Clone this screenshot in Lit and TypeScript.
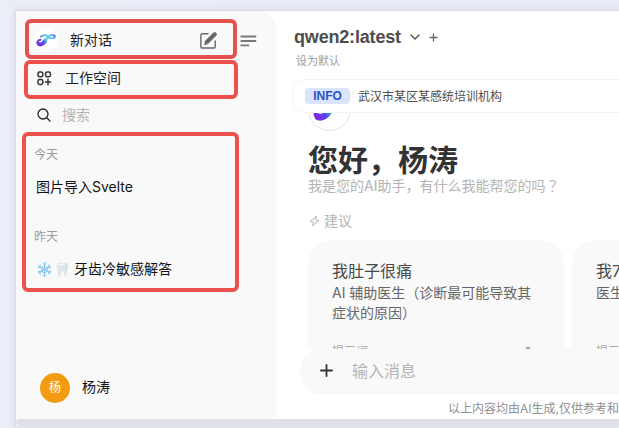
import { LitElement, html, css, svg } from "lit";
import { customElement } from "lit/decorators.js";

const ribbon = (id: string) => svg`
  <defs>
    <linearGradient id=${id} gradientUnits="userSpaceOnUse" x1="1" y1="13" x2="19" y2="2">
      <stop offset="0" stop-color="#8a1ee4"/>
      <stop offset=".32" stop-color="#5548e4"/>
      <stop offset=".55" stop-color="#4ec4ea"/>
      <stop offset=".8" stop-color="#6cc8ee"/>
      <stop offset="1" stop-color="#5a70e8"/>
    </linearGradient>
  </defs>
  <g fill="none" stroke="url(#${id})" stroke-linecap="round" stroke-linejoin="round">
    <path stroke-width="2" d="M4.500 6.800C1.600 7.200.6 9.800 2 11"/>
    <path stroke-width="4" d="M3 11.200C5.600 12 8 10 9 8"/>
    <path stroke-width="2" d="M9.800 7.500C11 4.600 12.600 2.200 15.500 2C18 1.800 19.300 3 18.600 4.200C17.800 5.600 15.600 5.600 13 4.800"/>
    <path stroke-width="1.800" d="M5 3.600C7.800 1.300 11 1.700 13 4.800"/>
  </g>`;

@customElement("app-sidebar")
class AppSidebar extends LitElement {
  static styles = css`
    :host { display: flex; flex-direction: column; box-sizing: border-box; width: 260px; height: 408px; padding-top: 8px;
      background: #f9f9f9; border-radius: 0 16px 6px 0; color: #222; font-size: 14px; line-height: 20px; flex: none; }
    svg { display: block; flex: none; }
    .top { display: flex; align-items: center; }
    .frame { box-sizing: border-box; border: 4px solid #ed514e; border-radius: 6px; display: flex; align-items: center; }
    .new { width: 212px; height: 40px; margin-left: 9px; padding: 2px 16px 0 5px; border-color: #e4524f; }
    .logo { width: 24px; height: 24px; border-radius: 50%; background: #fff; display: grid; place-items: center; }
    .new span { margin-left: 12px; flex: 1; }
    .menu { margin: 3px 0 0 3px; }
    .work { width: 214px; height: 39px; margin: 1px 0 0 8px; padding-left: 10px; padding-bottom: 3px; }
    .work svg { margin-left: -1px; }
    .work span { margin-left: 13px; }
    .search { display: flex; align-items: center; height: 33px; padding-left: 21px; padding-bottom: 2px; box-sizing: border-box; color: #b4b4b4; }
    .search span { margin-left: 11px; }
    .history { flex-direction: column; align-items: stretch; width: 217px; height: 160px; margin-left: 6px; padding: 9px 0 0 8px; }
    .day { font-size: 12px; line-height: 20px; color: #9b9b9b; }
    .chat { margin: 12px 0 30px 2px; line-height: 20px; display: flex; color: #111; }
    .chat svg { margin: 3px 2px 0 1px; }
    .chat .gap { margin-left: 2px; }
    .chat span.gap { margin-left: 3px; }
    .user { margin: auto 0 16px 24px; display: flex; align-items: center; color: #111; }
    .user span { margin-top: -2px; }
    .avatar { width: 30px; height: 30px; border-radius: 50%; background: #f39c12; color: #fff; font-size: 12px; line-height: 29px; text-align: center; margin-right: 12px; }
  `;
  render() {
    return html`
      <div class="top">
        <div class="frame new">
          <div class="logo"><svg width="20" height="14" viewBox="0 0 20 14">${ribbon("small")}</svg></div>
          <span>新对话</span>
          <svg width="17" height="17" viewBox="0 0 16 16" fill="none" stroke="#666" stroke-width="1.300" stroke-linecap="round" stroke-linejoin="round">
            <path d="M7.500 1.700H2.200A1.400 1.400 0 0 0 .8 3.100V13.600A1.400 1.400 0 0 0 2.200 15H12.900A1.400 1.400 0 0 0 14.300 13.600V8.300"/>
            <path d="M4.400 11.600L5.300 8.300L12.600 1A1.650 1.650 0 0 1 15 3.400L7.700 10.700Z" fill="#666" stroke-width=".8"/>
          </svg>
        </div>
        <svg class="menu" width="17" height="12" viewBox="0 0 17 12" fill="none" stroke="#777" stroke-width="1.800" stroke-linecap="round">
          <path d="M1.300 1.500H15.500M1.300 6H15.500M1.300 10.400H8.500"/>
        </svg>
      </div>
      <div class="frame work">
        <svg width="15" height="15" viewBox="0 0 15 15" fill="none" stroke="#333" stroke-width="1.500" stroke-linecap="round">
          <rect x="1" y="1" width="4.800" height="4.800" rx="1.600"/><rect x="8.600" y="1" width="4.800" height="4.800" rx="1.600"/>
          <rect x="1" y="8.600" width="4.800" height="4.800" rx="1.600"/><path d="M11 8.300V13.700M8.300 11H13.700"/>
        </svg>
        <span>工作空间</span>
      </div>
      <div class="search">
        <svg width="14" height="14" viewBox="0 0 14 14" fill="none" stroke="#222" stroke-width="1.300" stroke-linecap="round"><circle cx="6" cy="6" r="5"/><path d="M9.700 9.700L13 13"/></svg>
        <span>搜索</span>
      </div>
      <div class="frame history">
        <div class="day">今天</div>
        <div class="chat">图片导入Svelte</div>
        <div class="day">昨天</div>
        <div class="chat">
          <svg width="15" height="15" viewBox="0 0 15 15" fill="none" stroke="#86c4ec" stroke-width=".95" stroke-linecap="round">
            ${[0, 60, 120, 180, 240, 300].map(a => svg`<path transform="rotate(${a} 7.5 7.5)" d="M7.500 7.500V.4M5.700 1.300L7.500 3L9.300 1.300M6.300 4.300L7.500 5.400L8.700 4.300"/>`)}
          </svg>
          <svg class="gap" width="13" height="15" viewBox="0 0 13 15">
            <path d="M1 2.300C2 .2 4.800.4 6.500 1.300C8.400.3 11 .2 12 2.300C12.700 4 11.700 6 11.300 8C11 10 11 14.300 9.600 14.400C8 14.400 8.500 9 6.500 9C4.500 9 5 14.400 3.400 14.400C2 14.300 2 10 1.700 8C1.300 6 .3 4 1 2.300Z" fill="#dde7eb"/>
            <path d="M2.400 3C4 1.800 5.500 3.200 7.500 2.700" fill="none" stroke="#fff" stroke-width="1"/>
            <path d="M10.600 3C11 5 9.800 7 9.800 9" fill="none" stroke="#c3d2d9" stroke-width=".9"/>
          </svg>
          <span class="gap">牙齿冷敏感解答</span>
        </div>
      </div>
      <div class="user"><div class="avatar">杨</div><span>杨涛</span></div>`;
  }
}

@customElement("app-chat")
class AppChat extends LitElement {
  static styles = css`
    :host { display: block; flex: 1; min-width: 0; height: 408px; overflow: hidden; white-space: nowrap; }
    svg { display: block; flex: none; }
    .model { display: flex; align-items: center; height: 24px; padding: 14px 0 0 18px; color: #4c4c4c; }
    .name { width: 108px; font: 600 18px/24px "Liberation Sans", sans-serif; letter-spacing: -.18px; }
    .chev { margin-left: 8px; } .add { margin-left: 9px; }
    .default { font-size: 11px; line-height: 16px; color: #9b9b9b; margin: 4px 0 0 20px; }
    .banner { position: relative; z-index: 1; box-sizing: border-box; width: 420px; height: 34px; margin: 10px 0 0 16px; border: 1px solid #f4f4f4; border-radius: 12px; background: #fff; display: flex; align-items: center; padding: 0 0 1px 12px; font-size: 12px; color: #4d4d4d; }
    .info { width: 45px; height: 16px; border-radius: 4px; background: #d8e5fc; color: #2d50c8; font: 700 12px/16px "Liberation Sans", sans-serif; text-align: center; margin-right: 8px; }
    .face { box-sizing: border-box; width: 43px; height: 43px; margin: -25px 0 0 32px; border: 1px solid #e2e2e2; border-radius: 50%; padding: 8px 0 0 4px; }
    h1 { margin: 10px 0 0 32px; font-size: 30px; line-height: 38px; font-weight: 700; color: #333; }
    .sub { height: 20px; margin: -3px 0 0 32px; font-size: 14px; line-height: 20px; color: #b4b4b4; }
    .wide { font-family: "Noto Sans CJK JP", sans-serif; line-height: 1; }
    .hint { display: flex; align-items: center; gap: 4px; margin: 15px 0 0 33px; font-size: 14px; line-height: 20px; color: #b4b4b4; }
    .cards { position: relative; z-index: 1; display: flex; gap: 8px; margin: 9px 0 0 32px; height: 109px; overflow: hidden; }
    .card { flex: none; box-sizing: border-box; width: 256px; height: 140px; border-radius: 24px; background: #f9f9f9; padding: 20px 24px; white-space: normal; font-size: 14px; line-height: 20px; color: #676767; }
    .title { font-size: 16px; line-height: 23px; color: #4a4a4a; }
    .text { height: 40px; }
    .foot { display: flex; justify-content: space-between; font-size: 12px; color: #aaa; margin-top: 19px; height: 20px; }
    .foot svg { margin: 4px 7px 0 0; }
    .input { box-sizing: border-box; height: 48px; width: 420px; margin: -2px 0 0 24px; border-radius: 24px; background: #f9f9f9; display: flex; align-items: center; gap: 19px; padding: 0 0 1px 20px; font-size: 16px; color: #b4b4b4; }
    .input span { margin-top: -1px; }
    .note { margin: 5px 0 0 172px; font-size: 12px; line-height: 18px; color: #8f8f8f; }
  `;
  card(title: string, text: string) {
    return html`<div class="card"><div class="title">${title}</div><div class="text">${text}</div>
      <div class="foot"><span>提示词</span><svg width="10" height="12" viewBox="0 0 10 12"><path d="M5 0L9 4H6.200V11H3.800V4H1Z" fill="#aaa"/></svg></div></div>`;
  }
  render() {
    return html`
      <div class="model"><span class="name">qwen2:latest</span>
        <svg class="chev" width="10" height="8" viewBox="0 0 10 8" fill="none" stroke="#4c4c4c" stroke-width="1.300" stroke-linecap="round" stroke-linejoin="round"><path d="M1 2L5 6L9 2"/></svg>
        <svg class="add" width="9" height="9" viewBox="0 0 9 9" stroke="#666" stroke-width="1.300"><path d="M4.500 .5V8.500M.5 4.500H8.500"/></svg>
      </div>
      <div class="default">设为默认</div>
      <div class="banner"><span class="info">INFO</span>武汉市某区某感统培训机构</div>
      <div class="face"><svg width="35" height="25" viewBox="0 0 20 14">${ribbon("large")}</svg></div>
      <h1>您好，杨涛</h1>
      <div class="sub">我是您的AI助手，有什么我能帮您的吗<span class="wide" lang="ja">？</span></div>
      <div class="hint"><svg width="11" height="12" viewBox="0 0 11 12" fill="none" stroke="#b8b8b8" stroke-width="1" stroke-linejoin="round"><path d="M7.500 1L1 6.500L4.600 7.200L3.500 11L10 5.500L6.400 4.800Z"/></svg>建议</div>
      <div class="cards">
        ${this.card("我肚子很痛", "AI 辅助医生（诊断最可能导致其症状的原因）")}
        ${this.card("我7", "医生")}
      </div>
      <div class="input"><svg width="13" height="13" viewBox="0 0 13 13" stroke="#333" stroke-width="1.800" stroke-linecap="round"><path d="M6.500 1V12M1 6.500H12"/></svg><span>输入消息</span></div>
      <div class="note">以上内容均由AI生成,仅供参考和借鉴</div>`;
  }
}

@customElement("app-root")
class AppRoot extends LitElement {
  static styles = css`
    :host { display: block; box-sizing: border-box; width: 619px; height: 428px; padding: 10px 0 0 15px; overflow: hidden;
      background: linear-gradient(90deg, #eaf0f9, #e9edf6 15px, #e8ecf6); font-family: Inter, "Noto Sans CJK SC", sans-serif; }
    .window { box-sizing: border-box; height: 416px; border: 1px solid #d9dce2; border-right: 0; border-bottom-color: #e2e3ea; background: #fff; box-shadow: 0 0 6px rgba(80, 90, 120, .14); }
    .body { display: flex; height: 408px; }
    .scroll { height: 6px; background: #e0e0e6; border-radius: 3px 0 0 3px; }
  `;
  render() {
    return html`<div class="window"><div class="body"><app-sidebar></app-sidebar><app-chat></app-chat></div><div class="scroll"></div></div>`;
  }
}
